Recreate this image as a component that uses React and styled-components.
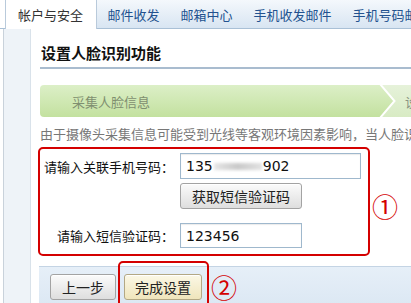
import React from 'react';
import styled, { createGlobalStyle } from 'styled-components';

const GlobalStyle = createGlobalStyle`
  html, body {
    margin: 0;
    padding: 0;
    background: #ffffff;
  }
  body {
    width: 411px;
    height: 303px;
    overflow: hidden;
    font-family: "Noto Sans CJK SC", "Noto Sans", sans-serif;
  }
`;

const Page = styled.div`
  width: 411px;
  height: 303px;
  display: flex;
  flex-direction: column;
  overflow: hidden;
`;

const TabBar = styled.div`
  display: flex;
  height: 28px;
  padding-left: 5px;
  border-bottom: 1px solid #a9c0d6;
  flex-shrink: 0;
  white-space: nowrap;
`;

const Tab = styled.div`
  display: flex;
  align-items: center;
  box-sizing: border-box;
  padding: ${p => (p.$active ? '0 13px 0 12px' : '0 10.5px')};
  font-size: 13px;
  color: ${p => (p.$active ? '#333333' : '#22528f')};
  background: ${p => (p.$active ? '#ffffff' : 'linear-gradient(#f4f8fc, #d8e5f2)')};
  border-left: ${p => (p.$active ? '1px solid #b9cadb' : 'none')};
  border-right: ${p => (p.$active ? '1px solid #b9cadb' : 'none')};
  margin-bottom: ${p => (p.$active ? '-1px' : '0')};
  height: ${p => (p.$active ? '29px' : '28px')};
`;

const Body = styled.div`
  flex: 1;
  display: flex;
  min-height: 0;
`;

const Sidebar = styled.div`
  width: 26px;
  margin-left: 3px;
  flex-shrink: 0;
  background: #eef3f8;
  border-left: 1px solid #c9d2db;
  border-right: 1px solid #d9e2ea;
`;

const Main = styled.div`
  flex: 1;
  min-width: 0;
  padding: 14px 0 0 9px;
  display: flex;
  flex-direction: column;
  overflow: hidden;
`;

const Title = styled.h2`
  margin: 0;
  font-size: 15px;
  font-weight: bold;
  line-height: 20px;
  color: #111111;
  padding: 0 0 4px 1px;
  border-bottom: 2px solid #a9bccf;
`;

const StepBar = styled.div`
  margin-top: 16px;
  height: 32px;
  display: flex;
  flex-shrink: 0;
  border-radius: 4px 0 0 4px;
  overflow: hidden;
  white-space: nowrap;
`;

const Step = styled.div`
  display: flex;
  align-items: center;
  height: 100%;
  font-size: 13px;
  color: ${p => (p.$current ? '#7f8f70' : '#8a9482')};
  background: ${p => (p.$current ? 'linear-gradient(#dcefc7, #c3e19f)' : 'linear-gradient(#e6f2da, #d8ebc4)')};
  padding-left: ${p => (p.$current ? '32px' : '9px')};
  width: ${p => (p.$current ? '292px' : 'auto')};
  flex-shrink: 0;
`;

const Chevron = styled.svg`
  flex-shrink: 0;
  display: block;
`;

const Desc = styled.p`
  margin: 8px 0 0 0;
  font-size: 13px;
  line-height: 18px;
  color: #777777;
  white-space: nowrap;
`;

const FormRow = styled.div`
  display: flex;
  align-items: center;
  margin-top: 4px;
  margin-left: -2px;
`;

const Highlight = styled.div`
  border: 2px solid #d40000;
  border-radius: 5px;
  padding: 4px 0 6px 2px;
  width: 326px;
  flex-shrink: 0;
`;

const FormGrid = styled.div`
  display: grid;
  grid-template-columns: 132px auto;
  column-gap: 6px;
  row-gap: 4px;
  align-items: center;
  justify-items: start;
`;

const Label = styled.label`
  justify-self: end;
  font-size: 13px;
  color: #111111;
  white-space: nowrap;
  margin-top: ${p => p.$spaced || 0}px;
`;

const Input = styled.div`
  box-sizing: border-box;
  width: ${p => p.$width}px;
  height: ${p => (p.$height || 26)}px;
  border: 1px solid #9fb8cd;
  box-shadow: inset 0 1px 1px rgba(0, 0, 0, 0.08);
  background: #ffffff;
  display: flex;
  align-items: center;
  padding-left: 5px;
  font-family: "DejaVu Sans", "Noto Sans", sans-serif;
  font-size: 14px;
  color: #111111;
  margin-top: ${p => p.$spaced || 0}px;
`;

const Blur = styled.span`
  display: inline-block;
  width: 48px;
  height: 7px;
  margin: 0 1px;
  background: linear-gradient(90deg, #e6e6e6, #c9c9c9 50%, #e2e2e2);
  filter: blur(1.5px);
`;

const Button = styled.button`
  box-sizing: border-box;
  height: 26px;
  padding: 0 ${p => p.$pad || 11}px;
  font-family: "Noto Sans CJK SC", "Noto Sans", sans-serif;
  font-size: 14px;
  color: #222222;
  border: 1px solid ${p => (p.$primary ? '#b3a884' : '#a3a3a3')};
  border-radius: 3px;
  background: ${p => (p.$primary ? 'linear-gradient(#fbf8e6, #efe5bc)' : 'linear-gradient(#fbfbfb, #dedede)')};
  box-shadow: inset 0 1px 0 #ffffff;
  cursor: pointer;
`;

const Mark = styled.span`
  color: #d40000;
  font-family: "DejaVu Serif", "Noto Sans CJK SC", serif;
  font-size: 26px;
  line-height: 26px;
  margin-left: ${p => p.$gap || 2}px;
  margin-top: ${p => p.$drop || 0}px;
`;

const ActionBar = styled.div`
  margin-top: 10px;
  margin-left: -1px;
  flex: 1;
  display: flex;
  align-items: flex-start;
  padding: 7px 0 0 11px;
  background: linear-gradient(#e6eff8, #d4e2f0);
  border-top: 1px solid #c4d4e4;
`;

const ActionHighlight = styled.div`
  margin: -13px 0 0 2px;
  padding: 11px 5px 0 4px;
  height: 60px;
  border: 2px solid #d40000;
  border-radius: 5px;
`;

const tabs = ['帐户与安全', '邮件收发', '邮箱中心', '手机收发邮件', '手机号码邮箱'];

const App = () => {
  return (
    <Page>
      <GlobalStyle />
      <TabBar>
        {tabs.map((t, i) => (
          <Tab key={t} $active={i === 0}>{t}</Tab>
        ))}
      </TabBar>
      <Body>
        <Sidebar />
        <Main>
          <Title>设置人脸识别功能</Title>
          <StepBar>
            <Step $current>采集人脸信息</Step>
            <Chevron width="32" height="32" viewBox="0 0 32 32">
              <defs>
                <linearGradient id="stepA" x1="0" y1="0" x2="0" y2="1">
                  <stop offset="0" stopColor="#dcefc7" />
                  <stop offset="1" stopColor="#c3e19f" />
                </linearGradient>
                <linearGradient id="stepB" x1="0" y1="0" x2="0" y2="1">
                  <stop offset="0" stopColor="#e6f2da" />
                  <stop offset="1" stopColor="#d8ebc4" />
                </linearGradient>
              </defs>
              <rect x="0" y="0" width="32" height="32" fill="url(#stepB)" />
              <path d="M0 0 H16 L30.5 16 L16 32 H0 Z" fill="url(#stepA)" />
              <path d="M16 -1 L30.5 16 L16 33" fill="none" stroke="#ffffff" strokeWidth="2" />
            </Chevron>
            <Step>设置完成</Step>
          </StepBar>
          <Desc>由于摄像头采集信息可能受到光线等客观环境因素影响，当人脸识别失败时</Desc>
          <FormRow>
            <Highlight>
              <FormGrid>
                <Label>请输入关联手机号码：</Label>
                <Input $width={181}>135<Blur />902</Input>
                <span />
                <Button $pad={11}>获取短信验证码</Button>
                <Label $spaced={10}>请输入短信验证码：</Label>
                <Input $width={122} $height={25} $spaced={10}>123456</Input>
              </FormGrid>
            </Highlight>
            <Mark $drop={12}>①</Mark>
          </FormRow>
          <ActionBar>
            <Button $pad={11}>上一步</Button>
            <ActionHighlight>
              <Button $primary $pad={10}>完成设置</Button>
            </ActionHighlight>
            <Mark $gap={2} $drop={2}>②</Mark>
          </ActionBar>
        </Main>
      </Body>
    </Page>
  );
};

export default App;
